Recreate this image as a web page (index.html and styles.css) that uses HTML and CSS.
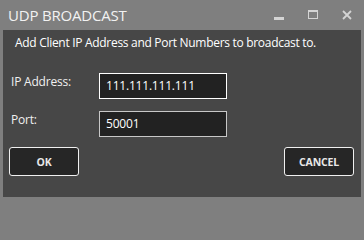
FILE: index.html
```html
<!DOCTYPE html>
<html>
<head>
<meta charset="utf-8">
<link rel="stylesheet" href="styles.css">
</head>
<body>
<div class="window">
  <div class="titlebar">
    <span class="title">UDP BROADCAST</span>
    <div class="controls">
      <span class="ctl ctl-min"><svg width="10" height="4" viewBox="0 0 10 4"><rect x="0" y="0" width="10" height="3" fill="#d4d4d4"/></svg></span>
      <span class="ctl ctl-max"><svg width="10" height="9" viewBox="0 0 10 9"><rect x="0.5" y="0.5" width="9" height="8" fill="none" stroke="#d4d4d4" stroke-width="1"/><rect x="0" y="0" width="10" height="2" fill="#d4d4d4"/></svg></span>
      <span class="ctl ctl-close"><svg width="10" height="10" viewBox="0 0 10 10"><path d="M1 1 L9 9 M9 1 L1 9" stroke="#d4d4d4" stroke-width="1.8"/></svg></span>
    </div>
  </div>
  <div class="content">
    <p class="desc">Add Client IP Address and Port Numbers to broadcast to.</p>
    <div class="form">
      <label class="label">IP Address:</label>
      <div class="field field-active">111.111.111.111</div>
      <label class="label">Port:</label>
      <div class="field">50001</div>
    </div>
    <div class="actions">
      <button class="btn">OK</button>
      <button class="btn">CANCEL</button>
    </div>
  </div>
</div>
</body>
</html>
```
FILE: styles.css
```css
html, body {
  margin: 0;
  padding: 0;
  background: #7f7f7f;
}
.window {
  width: 364px;
  height: 200px;
  box-sizing: border-box;
  padding: 0 3px 3px 3px;
  background: #7f7f7f;
  display: flex;
  flex-direction: column;
  font-family: "Open Sans", "Noto Sans", sans-serif;
}
.titlebar {
  height: 30px;
  display: flex;
  align-items: center;
  justify-content: space-between;
}
.title {
  color: #f2f2f2;
  font-size: 15px;
  font-weight: 400;
  margin-left: 5px;
  margin-top: -1px;
  letter-spacing: -0.2px;
}
.controls {
  display: flex;
  align-items: flex-start;
  height: 30px;
}
.ctl {
  display: flex;
}
.ctl-min { margin-top: 17px; margin-left: 0; }
.ctl-max { margin-top: 10px; margin-left: 24px; }
.ctl-close { margin-top: 10px; margin-left: 24px; margin-right: 9px; }
.content {
  flex: 1;
  background: #474747;
  display: flex;
  flex-direction: column;
  padding: 0 7px 0 6px;
}
.desc {
  margin: 5px 0 0 6px;
  color: #ffffff;
  font-size: 12px;
  line-height: 16px;
  letter-spacing: -0.3px;
}
.form {
  display: grid;
  grid-template-columns: 90px 128px;
  row-gap: 12px;
  margin-top: 22px;
}
.label {
  color: #f0f0f0;
  font-size: 12px;
  line-height: 16px;
  padding-top: 1px;
  margin-left: 2px;
  letter-spacing: -0.2px;
}
.field {
  height: 26px;
  box-sizing: border-box;
  border: 1px solid #c8c8c8;
  background: #222222;
  color: #ffffff;
  font-size: 12px;
  line-height: 24px;
  padding-left: 6px;
  letter-spacing: -0.2px;
}
.field-active {
  border-color: #ffffff;
}
.actions {
  display: flex;
  justify-content: space-between;
  margin-top: 10px;
}
.btn {
  width: 70px;
  height: 29px;
  box-sizing: border-box;
  border: 1px solid #f0f0f0;
  border-radius: 3px;
  background: #262626;
  color: #e8e8e8;
  font-family: "Open Sans", "Noto Sans", sans-serif;
  font-weight: 700;
  font-size: 10.5px;
  letter-spacing: -0.2px;
  padding: 0;
}
```
